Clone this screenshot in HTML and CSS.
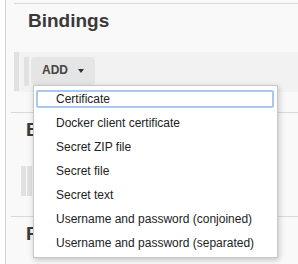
FILE: index.html
```html
<!DOCTYPE html>
<html>
<head>
    <meta charset="UTF-8">
    <title>Bindings</title>
    <link rel="stylesheet" href="styles.css">
</head>
<body>
    <div class="page">
        <div class="section section-bindings">
            <div class="section-title">Bindings</div>
            <div class="repeat-band">
                <div class="grip grip-outer"></div>
                <div class="grip grip-inner"></div>
                <div class="add-wrap">
                    <button class="add-button">ADD <span class="caret"></span></button>
                    <ul class="add-menu">
                        <li class="menu-item focused"><span>Certificate</span></li>
                        <li class="menu-item"><span>Docker client certificate</span></li>
                        <li class="menu-item"><span>Secret ZIP file</span></li>
                        <li class="menu-item"><span>Secret file</span></li>
                        <li class="menu-item"><span>Secret text</span></li>
                        <li class="menu-item"><span>Username and password (conjoined)</span></li>
                        <li class="menu-item"><span>Username and password (separated)</span></li>
                    </ul>
                </div>
            </div>
        </div>
        <div class="section">
            <div class="section-title">Build</div>
            <div class="grip-row">
                <div class="grip"></div>
                <div class="grip"></div>
            </div>
        </div>
        <div class="section">
            <div class="section-title">Post-build Actions</div>
        </div>
    </div>
</body>
</html>
```

FILE: styles.css
```css
body {
    margin: 0;
    background-color: #fff;
    font-family: 'Liberation Sans', Arial, sans-serif;
    overflow: hidden;
}

.page {
    margin-left: 5px;
    border-left: 1px solid #d4d4d4;
    background-color: #f9f9f9;
    min-height: 100vh;
    padding-top: 3px;
    box-sizing: border-box;
}

.section {
    margin-left: 5px;
    border-top: 1px solid #dadada;
    margin-top: 20px;
}

.section-bindings {
    margin-left: 8px;
    margin-top: 0;
}

.section-title {
    padding: 6px 0 0 15px;
    font-size: 19px;
    font-weight: bold;
    color: #3a3a3a;
}

.section-bindings .section-title {
    padding-left: 14px;
}

.repeat-band {
    display: flex;
    align-items: flex-start;
    margin-top: 20px;
    height: 40px;
    background-color: #f2f2f2;
}

.grip {
    width: 5px;
    background-color: #e1e1e1;
}

.grip-outer {
    height: 39px;
}

.grip-inner {
    height: 29px;
    margin: 5px 0 0 5px;
}

.add-wrap {
    position: relative;
    margin: 5px 0 0 2px;
}

.add-button {
    display: flex;
    align-items: center;
    gap: 10px;
    padding: 5px 11px 7px;
    height: 28px;
    box-sizing: border-box;
    border: none;
    border-radius: 4px;
    background-color: #e5e5e5;
    font-family: 'Liberation Sans', Arial, sans-serif;
    font-size: 12px;
    font-weight: bold;
    line-height: 16px;
    color: #444;
}

.caret {
    width: 0;
    height: 0;
    margin-top: 2px;
    border-left: 3px solid transparent;
    border-right: 3px solid transparent;
    border-top: 4px solid #333;
}

.add-menu {
    position: absolute;
    left: 2px;
    top: 28px;
    width: 245px;
    margin: 0;
    padding: 1px 0 2px;
    box-sizing: border-box;
    list-style: none;
    background-color: #fff;
    border: 1px solid #c8c8c8;
    box-shadow: 1px 2px 6px rgba(0, 0, 0, 0.22);
    z-index: 10;
}

.menu-item {
    padding: 3px 0;
    font-size: 12px;
    color: #222;
}

.menu-item span {
    display: block;
    margin: 0 3px 0 2px;
    padding-left: 20px;
    height: 18px;
    line-height: 18px;
    border-radius: 2px;
}

.menu-item.focused span {
    box-shadow: inset 0 0 0 2px #a9c9ec;
}

.grip-row {
    display: flex;
    gap: 1px;
    margin: 25px 0 0 10px;
}

.grip-row .grip {
    height: 30px;
}
```
